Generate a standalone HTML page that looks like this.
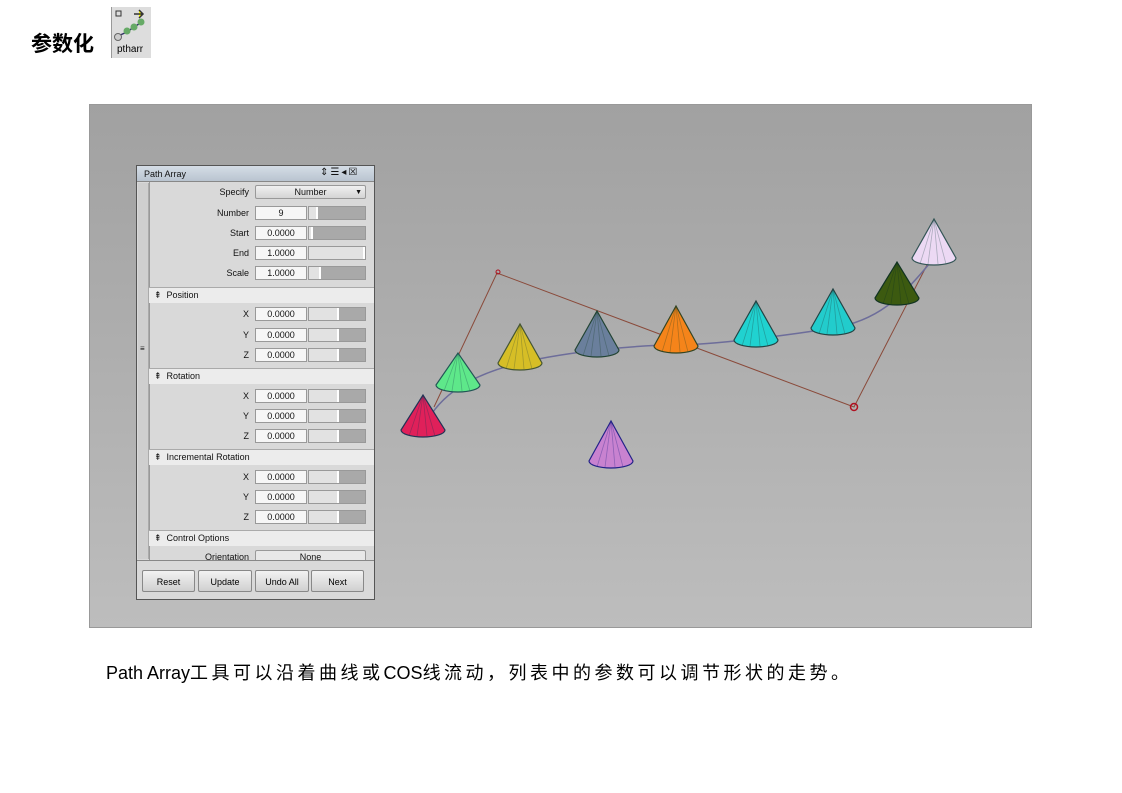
<!DOCTYPE html>
<html><head><meta charset="utf-8"><style>
body{margin:0;width:1122px;height:793px;background:#fff;position:relative;overflow:hidden;font-family:"Liberation Sans","Noto Sans CJK SC",sans-serif;}
.abs{position:absolute;}
.vp{left:89px;top:104px;width:943px;height:524px;background:linear-gradient(#a1a1a1,#bdbdbd);border:1px solid #999;box-sizing:border-box;}
.panel{left:136px;top:165px;width:239px;height:435px;background:#d9d9d9;border:1px solid #555;box-sizing:border-box;font-size:9px;color:#111;}
.title{left:0;top:0;width:237px;height:15px;background:linear-gradient(#d5dde6,#b9c4d0);border-bottom:1px solid #888;}
.lab{text-align:right;width:100px;}
.fld{width:52px;height:14px;background:#f6f6f6;border:1px solid #999;box-sizing:border-box;text-align:center;line-height:13px;}
.sl{width:58px;height:14px;border:1px solid #999;box-sizing:border-box;background:#a8a8a8;}
.hdr{left:12px;width:225px;height:15px;background:#ececec;border-top:1px solid #aaa;line-height:14px;}
.btn{top:570px;height:22px;border:1px solid #888;border-radius:2px;background:linear-gradient(#f2f2f2,#d0d0d0);text-align:center;line-height:22px;font-size:9px;box-sizing:border-box;}
</style></head><body>
<div class="abs" style="left:31px;top:28px;font-size:21px;font-weight:bold;">参数化</div>
<div class="abs" style="left:111px;top:7px;width:39px;height:51px;background:#ddd;border-left:1px solid #999;">
<svg width="39" height="51" class="abs" style="left:0;top:0"><rect x="4" y="4" width="5" height="5" fill="none" stroke="#333"/><path d="M22 7h8M27 3l4 4-4 4" stroke="#333" stroke-width="1.5" fill="#ff0"/><path d="M6 29 L15 25 L22 20 L30 15" stroke="#336" stroke-width="1.5" fill="none"/><circle cx="6" cy="30" r="3.5" fill="#ccc" stroke="#666"/><circle cx="15" cy="24" r="3.5" fill="#6a6"/><circle cx="22" cy="20" r="3.5" fill="#6a6"/><circle cx="29" cy="15" r="3.5" fill="#6a6"/><text x="5" y="45" font-size="10" font-family="Liberation Sans">ptharr</text></svg></div>
<div class="abs vp"></div>
<svg class="abs" style="left:0;top:0" width="1122" height="793" id="sv">
<polyline points="434,407 497,273 854,407 927,265" fill="none" stroke="#8a4a3a" stroke-width="1"/>
<path d="M425,425 C440,395 470,375 520,363 S640,345 676,345 S790,335 833,328 S900,300 934,258" fill="none" stroke="#6d6d9a" stroke-width="1.5"/>
<circle cx="854" cy="407" r="3.5" fill="none" stroke="#b01020" stroke-width="1.5"/>
<circle cx="498" cy="272" r="2" fill="none" stroke="#b01020"/>
<g id="cones"></g>
</svg>
<div class="abs panel">
<div class="abs title"><span class="abs" style="left:7px;top:3px;">Path Array</span><span class="abs" style="left:183px;top:1px;font-size:10px;letter-spacing:2px">⇕☰◂☒</span></div>
<div class="abs" style="left:1px;top:17px;width:10px;height:376px;background:#cfcfcf;border-right:1px solid #aaa"></div>
<div class="abs" style="left:12px;top:16px;width:1px;height:378px;background:#999"></div>
<div class="abs" style="left:0;top:394px;width:237px;height:1px;background:#888"></div>
<div class="abs" style="left:3px;top:178px;font-size:8px">≡</div>
<div class="abs lab" style="left:12px;top:21px">Specify</div><div class="abs" style="left:118px;top:19px;width:111px;height:14px;border:1px solid #999;border-radius:2px;background:linear-gradient(#f0f0f0,#d4d4d4);box-sizing:border-box;text-align:center;line-height:13px">Number<span class="abs" style="right:3px;top:0;font-size:7px">▼</span></div>
<div id="rows"></div>
<div class="abs hdr" style="top:121px">&nbsp;&nbsp;⇞&nbsp; Position</div>
<div class="abs hdr" style="top:202px">&nbsp;&nbsp;⇞&nbsp; Rotation</div>
<div class="abs hdr" style="top:283px">&nbsp;&nbsp;⇞&nbsp; Incremental Rotation</div>
<div class="abs hdr" style="top:364px">&nbsp;&nbsp;⇞&nbsp; Control Options</div>
<div class="abs" style="left:12px;top:380px;width:225px;height:14px;overflow:hidden"><div class="abs lab" style="left:0;top:6px">Orientation</div><div class="abs" style="left:106px;top:4px;width:111px;height:14px;border:1px solid #999;border-radius:2px;background:#e8e8e8;box-sizing:border-box;text-align:center;line-height:13px">None</div></div>
</div>
<div class="abs btn" style="left:142px;width:53px">Reset</div>
<div class="abs btn" style="left:198px;width:54px">Update</div>
<div class="abs btn" style="left:255px;width:54px">Undo All</div>
<div class="abs btn" style="left:311px;width:53px">Next</div>
<div class="abs" style="left:106px;top:659px;font-size:18px;white-space:nowrap;">Path Array<span style="letter-spacing:3.5px">工具可以沿着曲线或</span>COS<span style="letter-spacing:3.5px">线流动，列表中的参数可以调节形状的走势。</span></div>
<script>
var rows=[["Number","9",212,0.1],["Start","0.0000",232,0.0],["End","1.0000",252,1],["Scale","1.0000",272,0.15],
["X","0.0000",313,0.5],["Y","0.0000",334,0.5],["Z","0.0000",354,0.5],
["X","0.0000",395,0.5],["Y","0.0000",415,0.5],["Z","0.0000",435,0.5],
["X","0.0000",476,0.5],["Y","0.0000",496,0.5],["Z","0.0000",516,0.5]];
var h="";rows.forEach(function(r){var t=r[2]-165-7;var p=Math.round(r[3]*52);
h+='<div class="abs lab" style="left:12px;top:'+(t+2)+'px">'+r[0]+'</div><div class="abs fld" style="left:118px;top:'+t+'px">'+r[1]+'</div><div class="abs sl" style="left:171px;top:'+t+'px;background:linear-gradient(90deg,#e2e2e2 '+(p+2)+'px,#fff '+(p+2)+'px,#fff '+(p+4)+'px,#a9a9a9 '+(p+4)+'px)"></div>';});
document.getElementById("rows").innerHTML=h;
var cones=[[423,395,430,"#e0205a","#235"],[458,353,385,"#5ee88a","#255"],[520,324,363,"#d6be26","#453"],[597,311,350,"#6a7f9c","#243"],[676,306,346,"#f5841a","#342"],[756,301,340,"#20d2d0","#244"],[833,289,328,"#22cccc","#244"],[897,262,298,"#3c5a10","#132"],[934,219,258,"#ecd9f4","#355"],[611,421,461,"#c882d0","#228"]];
var s="";cones.forEach(function(c){var x=c[0],a=c[1],b=c[2];
s+='<path d="M'+(x-22)+','+b+' L'+x+','+a+' L'+(x+22)+','+b+' A22,7 0 0 1 '+(x-22)+','+b+'Z" fill="'+c[3]+'" stroke="'+c[4]+'" stroke-width="1.2"/>';
[-14,-6,4,12].forEach(function(d){s+='<line x1="'+x+'" y1="'+a+'" x2="'+(x+d)+'" y2="'+(b+6)+'" stroke="'+c[4]+'" stroke-opacity="0.35" stroke-width="0.8"/>';});});
document.getElementById("cones").innerHTML=s;
</script>
</body></html>
